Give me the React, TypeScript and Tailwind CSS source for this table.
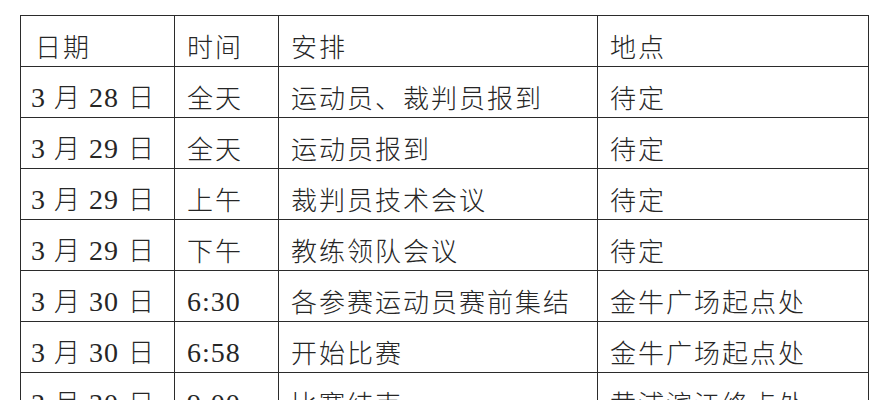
import React from "react";

type Row = { date: [string, string]; time: string; plan: string; place: string };

const rows: Row[] = [
  { date: ["3", "28"], time: "全天", plan: "运动员、裁判员报到", place: "待定" },
  { date: ["3", "29"], time: "全天", plan: "运动员报到", place: "待定" },
  { date: ["3", "29"], time: "上午", plan: "裁判员技术会议", place: "待定" },
  { date: ["3", "29"], time: "下午", plan: "教练领队会议", place: "待定" },
  { date: ["3", "30"], time: "6:30", plan: "各参赛运动员赛前集结", place: "金牛广场起点处" },
  { date: ["3", "30"], time: "6:58", plan: "开始比赛", place: "金牛广场起点处" },
  { date: ["3", "30"], time: "9:00", plan: "比赛结束", place: "黄浦滨江终点处" },
];

const cell = "border border-[#2b2b2b] h-[51px] pt-[10px] align-middle whitespace-nowrap";
const serif = "font-['Liberation_Serif',serif] font-normal";

const isDigits = (s: string) => /^[0-9:]+$/.test(s);

const DateText: React.FC<{ month: string; day: string }> = ({ month, day }) => (
  <span className="inline-flex items-baseline gap-[9px] tracking-normal">
    <span className={`${serif} text-[28px]`}>{month}</span>
    <span>月</span>
    <span className={`${serif} text-[28px] tracking-[1px]`}>{day}</span>
    <span>日</span>
  </span>
);

const App: React.FC = () => {
  return (
    <div className="min-h-screen bg-white pt-[15px] pl-[20px] text-[#262626] text-[26px] leading-none tracking-[2px] font-light font-['Noto_Sans_CJK_SC',sans-serif]">
      <table className="table-fixed border-collapse w-[848px]">
        <colgroup>
          <col className="w-[154px]" />
          <col className="w-[104px]" />
          <col className="w-[319px]" />
          <col className="w-[271px]" />
        </colgroup>
        <tbody>
          <tr>
            <td className={`${cell} pl-[14px]`}>日期</td>
            <td className={`${cell} pl-[12px]`}>时间</td>
            <td className={`${cell} pl-[12px]`}>安排</td>
            <td className={`${cell} pl-[12px]`}>地点</td>
          </tr>
          {rows.map((r, i) => (
            <tr key={i}>
              <td className={`${cell} pl-[10px]`}>
                <DateText month={r.date[0]} day={r.date[1]} />
              </td>
              <td className={`${cell} pl-[12px]`}>
                {isDigits(r.time) ? (
                  <span className={`${serif} text-[28px] tracking-[1px]`}>{r.time}</span>
                ) : (
                  r.time
                )}
              </td>
              <td className={`${cell} pl-[12px]`}>{r.plan}</td>
              <td className={`${cell} pl-[12px]`}>{r.place}</td>
            </tr>
          ))}
        </tbody>
      </table>
    </div>
  );
};

export default App;
